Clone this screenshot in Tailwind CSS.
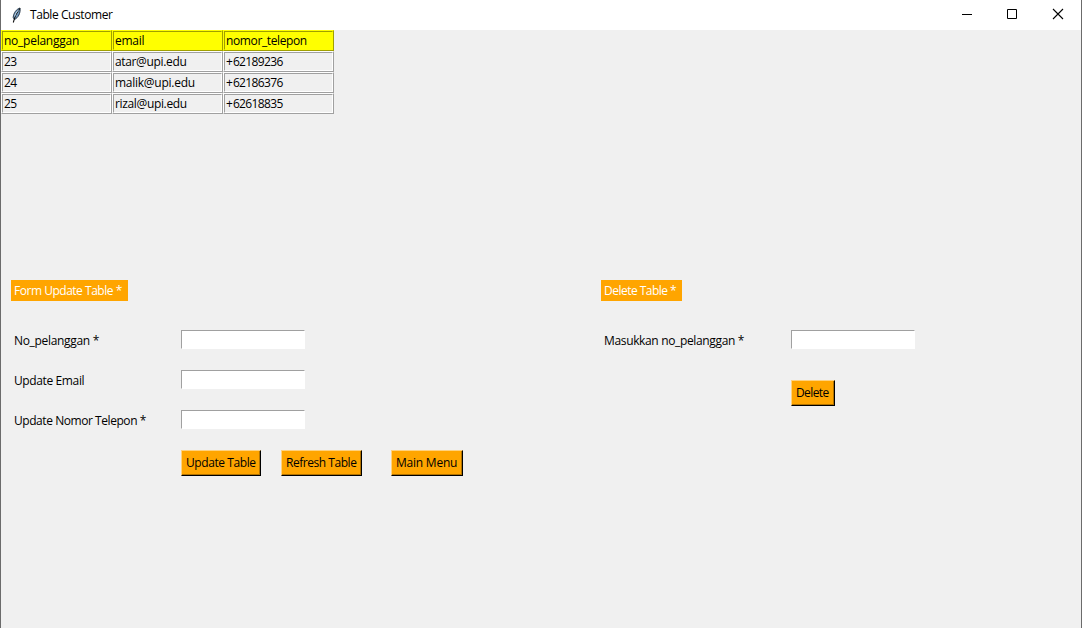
<!DOCTYPE html>
<html lang="id"><head><meta charset="utf-8"><title>Table Customer</title>
<script src="https://cdn.jsdelivr.net/npm/@tailwindcss/browser@4"></script></head>
<body class="w-[1082px] h-[628px] overflow-hidden bg-[#f0f0f0] text-black text-[12px] leading-[15px] font-['Open_Sans','Noto_Sans',sans-serif] whitespace-nowrap">
<div class="flex h-full flex-col border-x border-[#6b6b6b]">
  <header class="flex h-[30px] shrink-0 items-center bg-white">
    <svg class="ml-[8px] h-4 w-4" viewBox="0 0 16 16"><path d="M11 1C7.500 2 4.500 6 4.200 10.500L5.500 12.500C9 11 11.800 6 11 1Z" fill="#6f97bd" stroke="#1c2b3c" stroke-width=".9"/><path d="M11 1.500Q6.500 6.500 4.300 15.500" fill="none" stroke="#111" stroke-width="1.100"/><path d="M9.500 3Q6.300 6 5.600 9.500" fill="none" stroke="#c5dced" stroke-width=".9"/></svg>
    <h1 class="-mt-px ml-[5px] tracking-[-0.42px]">Table Customer</h1>
    <div class="ml-auto flex">
      <svg class="h-[30px] w-[46px]" viewBox="0 0 46 30"><path d="M19 14.500h10" stroke="#000"/></svg>
      <svg class="h-[30px] w-[46px]" viewBox="0 0 46 30"><path d="M18.500 9.500h9v9h-9z" fill="none" stroke="#000"/></svg>
      <svg class="h-[30px] w-[46px]" viewBox="0 0 46 30"><path d="M18 9l10 10M28 9l-10 10" stroke="#000" stroke-width="1.100"/></svg>
    </div>
  </header>
  <main class="flex flex-col">
    <div class="grid h-[84px] w-[333px] grid-cols-3 grid-rows-4">
      <div class="border border-t-[#ff0] border-l-[#ff0] border-r-[#a0a000] border-b-[#a0a000] bg-[#ff0]"><div class="h-full border border-t-[#a0a000] border-l-[#a0a000] border-r-[#ff0] border-b-[#ff0] pl-px pt-px tracking-[-0.25px]">no_pelanggan</div></div>
      <div class="border border-t-[#ff0] border-l-[#ff0] border-r-[#a0a000] border-b-[#a0a000] bg-[#ff0]"><div class="h-full border border-t-[#a0a000] border-l-[#a0a000] border-r-[#ff0] border-b-[#ff0] pl-px pt-px tracking-[-0.25px]">email</div></div>
      <div class="border border-t-[#ff0] border-l-[#ff0] border-r-[#a0a000] border-b-[#a0a000] bg-[#ff0]"><div class="h-full border border-t-[#a0a000] border-l-[#a0a000] border-r-[#ff0] border-b-[#ff0] pl-px pt-px tracking-[-0.38px]">nomor_telepon</div></div>
      <div class="border border-t-white border-l-white border-r-[#a0a0a0] border-b-[#a0a0a0]"><div class="h-full border border-t-[#a0a0a0] border-l-[#a0a0a0] border-r-white border-b-white pl-px pt-px tracking-[-0.6px]">23</div></div>
      <div class="border border-t-white border-l-white border-r-[#a0a0a0] border-b-[#a0a0a0]"><div class="h-full border border-t-[#a0a0a0] border-l-[#a0a0a0] border-r-white border-b-white pl-px pt-px tracking-[-0.35px]">atar@upi.edu</div></div>
      <div class="border border-t-white border-l-white border-r-[#a0a0a0] border-b-[#a0a0a0]"><div class="h-full border border-t-[#a0a0a0] border-l-[#a0a0a0] border-r-white border-b-white pl-px pt-px tracking-[-0.62px]"><span class="tracking-normal">+</span>62189236</div></div>
      <div class="border border-t-white border-l-white border-r-[#a0a0a0] border-b-[#a0a0a0]"><div class="h-full border border-t-[#a0a0a0] border-l-[#a0a0a0] border-r-white border-b-white pl-px pt-px tracking-[-0.6px]">24</div></div>
      <div class="border border-t-white border-l-white border-r-[#a0a0a0] border-b-[#a0a0a0]"><div class="h-full border border-t-[#a0a0a0] border-l-[#a0a0a0] border-r-white border-b-white pl-px pt-px tracking-[-0.26px]">malik@upi.edu</div></div>
      <div class="border border-t-white border-l-white border-r-[#a0a0a0] border-b-[#a0a0a0]"><div class="h-full border border-t-[#a0a0a0] border-l-[#a0a0a0] border-r-white border-b-white pl-px pt-px tracking-[-0.62px]"><span class="tracking-normal">+</span>62186376</div></div>
      <div class="border border-t-white border-l-white border-r-[#a0a0a0] border-b-[#a0a0a0]"><div class="h-full border border-t-[#a0a0a0] border-l-[#a0a0a0] border-r-white border-b-white pl-px pt-px tracking-[-0.6px]">25</div></div>
      <div class="border border-t-white border-l-white border-r-[#a0a0a0] border-b-[#a0a0a0]"><div class="h-full border border-t-[#a0a0a0] border-l-[#a0a0a0] border-r-white border-b-white pl-px pt-px tracking-[-0.35px]">rizal@upi.edu</div></div>
      <div class="border border-t-white border-l-white border-r-[#a0a0a0] border-b-[#a0a0a0]"><div class="h-full border border-t-[#a0a0a0] border-l-[#a0a0a0] border-r-white border-b-white pl-px pt-px tracking-[-0.62px]"><span class="tracking-normal">+</span>62618835</div></div>
    </div>
    <div class="mt-[166px] flex">
      <section class="ml-[10px] w-[590px]">
        <h2 class="h-[21px] w-[117px] bg-[#ffa500] px-[3px] pt-[3px] tracking-[-0.48px] text-white">Form Update Table *</h2>
        <div class="mt-[29px] grid grid-cols-[170px_124px] auto-rows-[40px]">
          <label class="pl-[3px] pt-[3px] tracking-[-0.32px]" for="no">No_pelanggan *</label>
          <input id="no" class="h-[19px] w-[124px] rounded-none border border-t-[#a0a0a0] border-l-[#a0a0a0] border-r-white border-b-white bg-white">
          <label class="pl-[3px] pt-[3px] tracking-[-0.38px]" for="email">Update Email</label>
          <input id="email" class="h-[19px] w-[124px] rounded-none border border-t-[#a0a0a0] border-l-[#a0a0a0] border-r-white border-b-white bg-white">
          <label class="pl-[3px] pt-[3px] tracking-[-0.44px]" for="telepon">Update Nomor Telepon *</label>
          <input id="telepon" class="h-[19px] w-[124px] rounded-none border border-t-[#a0a0a0] border-l-[#a0a0a0] border-r-white border-b-white bg-white">
        </div>
        <div class="ml-[170px] flex">
          <button class="h-[26px] w-[80px] border border-t-[#ffd27f] border-l-[#ffd27f] border-r-black border-b-black bg-[#ffa500]"><span class="block h-full border-r border-b border-[#b27300] pt-[4px] pl-[4px] text-left tracking-[-0.42px]">Update Table</span></button>
          <button class="ml-[20px] h-[26px] w-[81px] border border-t-[#ffd27f] border-l-[#ffd27f] border-r-black border-b-black bg-[#ffa500]"><span class="block h-full border-r border-b border-[#b27300] pt-[4px] pl-[4px] text-left tracking-[-0.46px]">Refresh Table</span></button>
          <button class="ml-[29px] h-[26px] w-[72px] border border-t-[#ffd27f] border-l-[#ffd27f] border-r-black border-b-black bg-[#ffa500]"><span class="block h-full border-r border-b border-[#b27300] pt-[4px] pl-[4px] text-left tracking-[-0.22px]">Main Menu</span></button>
        </div>
      </section>
      <section>
        <h2 class="h-[21px] w-[81px] bg-[#ffa500] px-[3px] pt-[3px] tracking-[-0.52px] text-white">Delete Table *</h2>
        <div class="mt-[29px] grid grid-cols-[190px_124px] grid-rows-[50px_26px]">
          <label class="pl-[3px] pt-[3px] tracking-[-0.35px]" for="hapus">Masukkan no_pelanggan *</label>
          <input id="hapus" class="h-[19px] w-[124px] rounded-none border border-t-[#a0a0a0] border-l-[#a0a0a0] border-r-white border-b-white bg-white">
          <button class="col-start-2 h-[26px] w-[44px] border border-t-[#ffd27f] border-l-[#ffd27f] border-r-black border-b-black bg-[#ffa500]"><span class="block h-full border-r border-b border-[#b27300] pt-[4px] pl-[4px] text-left tracking-[-0.6px]">Delete</span></button>
        </div>
      </section>
    </div>
  </main>
</div>
</body></html>
